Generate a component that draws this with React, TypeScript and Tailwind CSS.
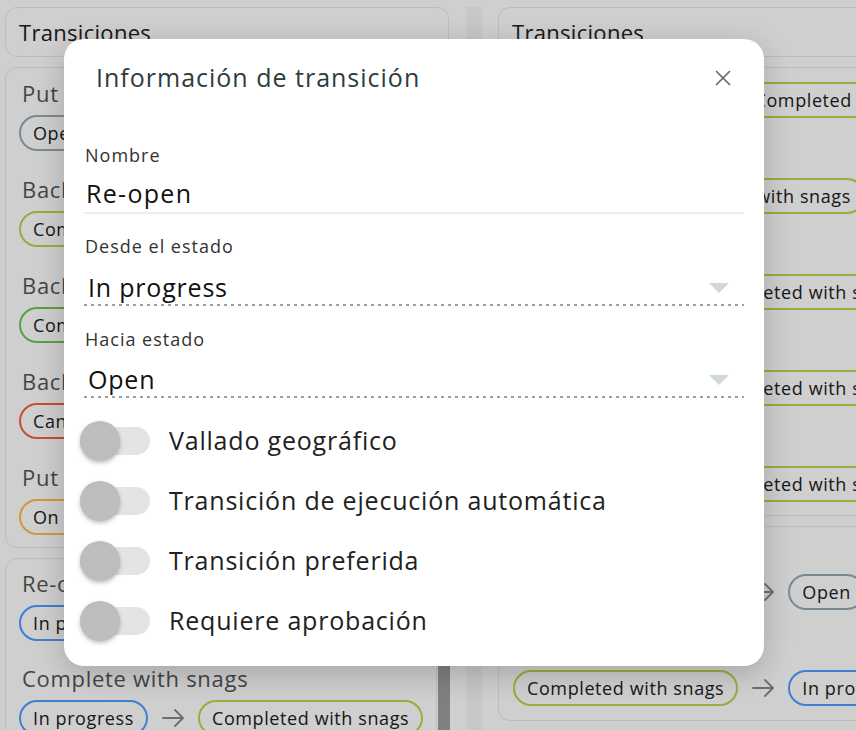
import { X } from "lucide-react";

type Tone = "open" | "snags" | "done" | "cancel" | "hold" | "progress";

const toneClass: Record<Tone, string> = {
  open: "border-[#97aab7]",
  snags: "border-[#bed44a]",
  done: "border-[#6fc359]",
  cancel: "border-[#f85d49]",
  hold: "border-[#ffbe48]",
  progress: "border-[#4e9dff]",
};

const states: Record<Tone, string> = {
  open: "Open",
  snags: "Completed with snags",
  done: "Completed",
  cancel: "Cancelled",
  hold: "On hold",
  progress: "In progress",
};

type Item = { title: string; from: Tone | string; to: Tone };

function Pill({ tone, label }: { tone: Tone; label?: string }) {
  return (
    <span
      className={`flex h-[36px] shrink-0 items-center whitespace-nowrap rounded-full border-2 px-[12px] text-[18px] tracking-[0.6px] text-[#202020] ${toneClass[tone]}`}
    >
      {label ?? states[tone]}
    </span>
  );
}

function Arrow() {
  return (
    <svg width="22" height="18" viewBox="0 0 22 18" fill="none" className="shrink-0">
      <path d="M1 9H21M13 1L21 9L13 17" stroke="#888" strokeWidth="1.8" strokeLinecap="round" strokeLinejoin="round" />
    </svg>
  );
}

function TransitionRow({ item }: { item: Item }) {
  const fromTone = (item.from in states ? item.from : "open") as Tone;
  const fromLabel = item.from in states ? undefined : item.from;
  return (
    <div className="flex flex-col">
      <div className="h-[30px] whitespace-nowrap pl-[3px] text-[22px] leading-[30px] tracking-[0.7px] text-[#555]">
        {item.title}
      </div>
      <div className="mt-[7px] flex items-center gap-[14px]">
        <Pill tone={fromTone} label={fromLabel} />
        <Arrow />
        <Pill tone={item.to} />
      </div>
    </div>
  );
}

function HeaderCard() {
  return (
    <div className="flex h-[50px] items-center rounded-[12px] border border-[#e9e9e9] px-[13px] text-[22px] tracking-[0.3px] text-[#202020]">
      Transiciones
    </div>
  );
}

const leftMain: Item[] = [
  { title: "Put back to open", from: "open", to: "progress" },
  { title: "Back to progress", from: "snags", to: "progress" },
  { title: "Back to progress", from: "done", to: "progress" },
  { title: "Back to open", from: "cancel", to: "open" },
  { title: "Put in progress", from: "hold", to: "progress" },
];

const leftSecond: Item[] = [
  { title: "Re-open", from: "progress", to: "open" },
  { title: "Complete with snags", from: "progress", to: "snags" },
];

const rightMain: Item[] = [
  { title: "Finish", from: "Ready for review", to: "snags" },
  { title: "Finish", from: "open", to: "snags" },
  { title: "Finish", from: "progress", to: "snags" },
  { title: "Finish", from: "progress", to: "snags" },
  { title: "Finish", from: "progress", to: "snags" },
];

const rightSecond: Item[] = [
  { title: "Reopen", from: "snags", to: "open" },
  { title: "Resume", from: "snags", to: "progress" },
];

function Dropdown({ value }: { value: string }) {
  return (
    <div className="flex flex-col">
      <div className="flex h-[32px] items-center justify-between pl-[4px] pr-[15px]">
        <span className="text-[25px] tracking-[0.8px] text-[#111]">{value}</span>
        <svg width="20" height="10" viewBox="0 0 20 10">
          <path d="M0 0H20L10 10Z" fill="#cfd8dc" />
        </svg>
      </div>
      <div className="h-[2px] bg-[repeating-linear-gradient(to_right,#9e9e9e_0_3px,transparent_3px_7px)]" />
    </div>
  );
}

function Toggle({ label }: { label: string }) {
  return (
    <div className="flex h-[40px] items-center">
      <div className="relative h-[28px] w-[70px] shrink-0 rounded-full bg-[#e4e4e4]">
        <div className="absolute -top-[6px] left-0 h-[40px] w-[40px] rounded-full bg-[#bdbdbd] shadow-[0_2px_4px_rgba(0,0,0,0.25)]" />
      </div>
      <span className="ml-[19px] text-[25px] tracking-[0.8px] text-[#212121]">{label}</span>
    </div>
  );
}

export default function App() {
  return (
    <div
      className="relative h-[730px] w-[856px] overflow-hidden bg-white"
      style={{ fontFamily: '"Open Sans", "Noto Sans", sans-serif' }}
    >
      <div className="flex px-[5px] pt-[7px]">
        {/* left column */}
        <div className="flex w-[444px] shrink-0 flex-col gap-[10px]">
          <HeaderCard />
          <div className="flex flex-col gap-[23px] rounded-[12px] border border-[#e9e9e9] px-[13px] pb-[12px] pt-[10px]">
            {leftMain.map((it, i) => (
              <TransitionRow key={i} item={it} />
            ))}
          </div>
          <div className="flex">
            <div className="flex flex-1 flex-col gap-[22px] rounded-[12px] border border-[#e9e9e9] px-[13px] pb-[14px] pt-[9px]">
              {leftSecond.map((it, i) => (
                <TransitionRow key={i} item={it} />
              ))}
            </div>
            <div className="ml-[1px] w-[12px] shrink-0 pt-[40px]">
              <div className="h-full bg-[#9e9e9e]" />
            </div>
          </div>
        </div>

        {/* splitter */}
        <div className="flex w-[49px] shrink-0 justify-center">
          <div className="h-[740px] w-[16px] bg-[#f5f5f5]" />
        </div>

        {/* right column */}
        <div className="flex w-[444px] shrink-0 flex-col gap-[10px]">
          <HeaderCard />
          <div className="overflow-hidden rounded-[12px] border border-[#e9e9e9]">
            <div className="-mt-[33px] flex flex-col gap-[23px] px-[14px] pb-[13px] pt-[10px]">
              {rightMain.map((it, i) => (
                <TransitionRow key={i} item={it} />
              ))}
            </div>
          </div>
          <div className="flex flex-col gap-[23px] rounded-[12px] border border-[#e9e9e9] px-[14px] pb-[14px] pt-[10px]">
            {rightSecond.map((it, i) => (
              <TransitionRow key={i} item={it} />
            ))}
          </div>
        </div>
      </div>

      {/* backdrop */}
      <div className="absolute inset-0 bg-black/[0.19]" />

      {/* dialog */}
      <div className="absolute left-[64px] top-[39px] flex w-[700px] flex-col rounded-[20px] bg-white pb-[25px] shadow-[0_8px_30px_rgba(0,0,0,0.2)]">
        <div className="mt-[22px] flex h-[34px] items-center justify-between pl-[32px] pr-[28px]">
          <h2 className="text-[25px] tracking-[1px] text-[#2e3b40]">Información de transición</h2>
          <X size={26} strokeWidth={1.6} className="text-[#5f6e74]" />
        </div>

        <div className="flex flex-col px-[20px]">
          <label className="mt-[49px] h-[22px] pl-[1px] text-[18px] leading-[22px] tracking-[1px] text-[#333]">Nombre</label>
          <div className="mt-[12px] flex h-[32px] items-center pl-[2px] text-[25px] tracking-[1.3px] text-[#111]">Re-open</div>
          <div className="mt-[2px] h-[2px] bg-[#eeeeee]" />

          <label className="mt-[21px] h-[22px] pl-[1px] text-[18px] leading-[22px] tracking-[1px] text-[#333]">Desde el estado</label>
          <div className="mt-[15px]">
            <Dropdown value="In progress" />
          </div>

          <label className="mt-[22px] h-[22px] pl-[1px] text-[18px] leading-[22px] tracking-[1px] text-[#333]">Hacia estado</label>
          <div className="mt-[14px]">
            <Dropdown value="Open" />
          </div>
        </div>

        <div className="mt-[23px] flex flex-col gap-[20px] pl-[16px]">
          <Toggle label="Vallado geográfico" />
          <Toggle label="Transición de ejecución automática" />
          <Toggle label="Transición preferida" />
          <Toggle label="Requiere aprobación" />
        </div>
      </div>
    </div>
  );
}
